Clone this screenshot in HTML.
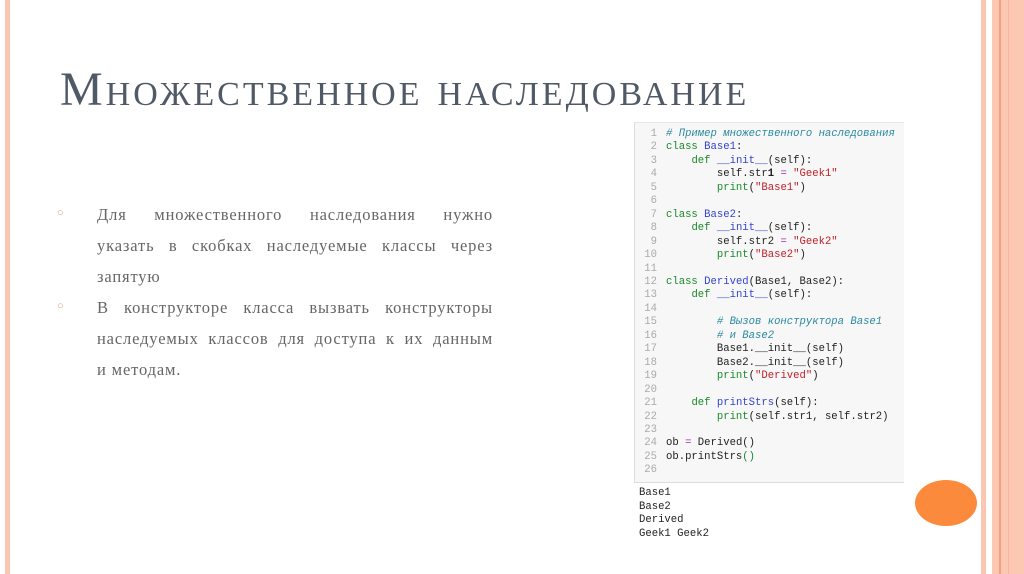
<!DOCTYPE html>
<html><head><meta charset="utf-8"><style>
*{margin:0;padding:0;box-sizing:border-box}
body{width:1024px;height:574px;background:#fff;position:relative;overflow:hidden;font-family:"Liberation Serif","Noto Serif CJK SC",serif}
.s{position:absolute;top:0;height:574px}
h1{position:absolute;left:60px;top:62px;font-weight:normal;font-size:48px;font-variant:small-caps;color:#505a66;white-space:nowrap;letter-spacing:3px}
.t{position:absolute;left:97px;width:396px;font-size:16.5px;letter-spacing:0.85px;color:#666;line-height:31px}
.t span{display:block;white-space:nowrap;text-align:justify;text-align-last:justify}
.t span.l{text-align-last:left}
.b{position:absolute;left:57px;font-size:11px;color:#e8a080}
.code{position:absolute;left:634px;top:122px;width:270px;height:361px;background:#f7f7f7;border-left:1px solid #ddd;border-top:1px solid #e6e6e6;border-bottom:1px solid #ddd}
pre{font-family:"Liberation Mono","DejaVu Sans Mono",monospace;font-size:10.6px;line-height:13.45px;color:#222}
.ln{position:absolute;left:4px;top:5px;color:#aaa;text-align:right;width:18px}
.src{position:absolute;left:31px;top:5px}
.k{color:#1a8a2a}.n{color:#3344cc}.c{color:#2a8aa0;font-style:italic}.st{color:#c0202a}.o{color:#a030a0}
.out{position:absolute;left:639px;top:487px;line-height:13.6px}
</style></head><body>
<div class="s" style="left:5px;width:5px;background:#fbc6b2"></div>
<div class="s" style="left:981px;width:5px;background:#fbc6b2"></div>
<div class="s" style="left:992px;width:32px;background:#fcc8b2"></div>
<div class="s" style="left:999px;width:2px;background:#f2a080"></div>
<div class="s" style="left:1008px;width:1px;background:#f7b89e"></div>
<h1>Множественное наследование</h1>
<div class="b" style="top:207px">○</div>
<div class="b" style="top:300px">○</div>
<div class="t" style="top:199px"><span>Для множественного наследования нужно</span><span>указать в скобках наследуемые классы через</span><span class="l">запятую</span></div>
<div class="t" style="top:292px"><span>В конструкторе класса вызвать конструкторы</span><span>наследуемых классов для доступа к их данным</span><span class="l">и методам.</span></div>
<div class="code">
<pre class="ln">1
2
3
4
5
6
7
8
9
10
11
12
13
14
15
16
17
18
19
20
21
22
23
24
25
26</pre>
<pre class="src"><span class="c"># Пример множественного наследования</span>
<span class="k">class</span> <span class="n">Base1</span>:
    <span class="k">def</span> <span class="n">__init__</span>(self):
        self.str<b>1</b> <span class="o">=</span> <span class="st">"Geek1"</span>
        <span class="k">print</span>(<span class="st">"Base1"</span>)

<span class="k">class</span> <span class="n">Base2</span>:
    <span class="k">def</span> <span class="n">__init__</span>(self):
        self.str2 <span class="o">=</span> <span class="st">"Geek2"</span>
        <span class="k">print</span>(<span class="st">"Base2"</span>)

<span class="k">class</span> <span class="n">Derived</span>(Base1, Base2):
    <span class="k">def</span> <span class="n">__init__</span>(self):

        <span class="c"># Вызов конструктора Base1</span>
        <span class="c"># и Base2</span>
        Base1.__init__(self)
        Base2.__init__(self)
        <span class="k">print</span>(<span class="st">"Derived"</span>)

    <span class="k">def</span> <span class="n">printStrs</span>(self):
        <span class="k">print</span>(self.str1, self.str2)

ob <span class="o">=</span> Derived()
ob.printStrs<span class="k">()</span>
</pre>
</div>
<pre class="out">Base1
Base2
Derived
Geek1 Geek2</pre>
<div style="position:absolute;left:915px;top:480px;width:62px;height:46px;border-radius:50%;background:#fb8a3c"></div>
</body></html>
